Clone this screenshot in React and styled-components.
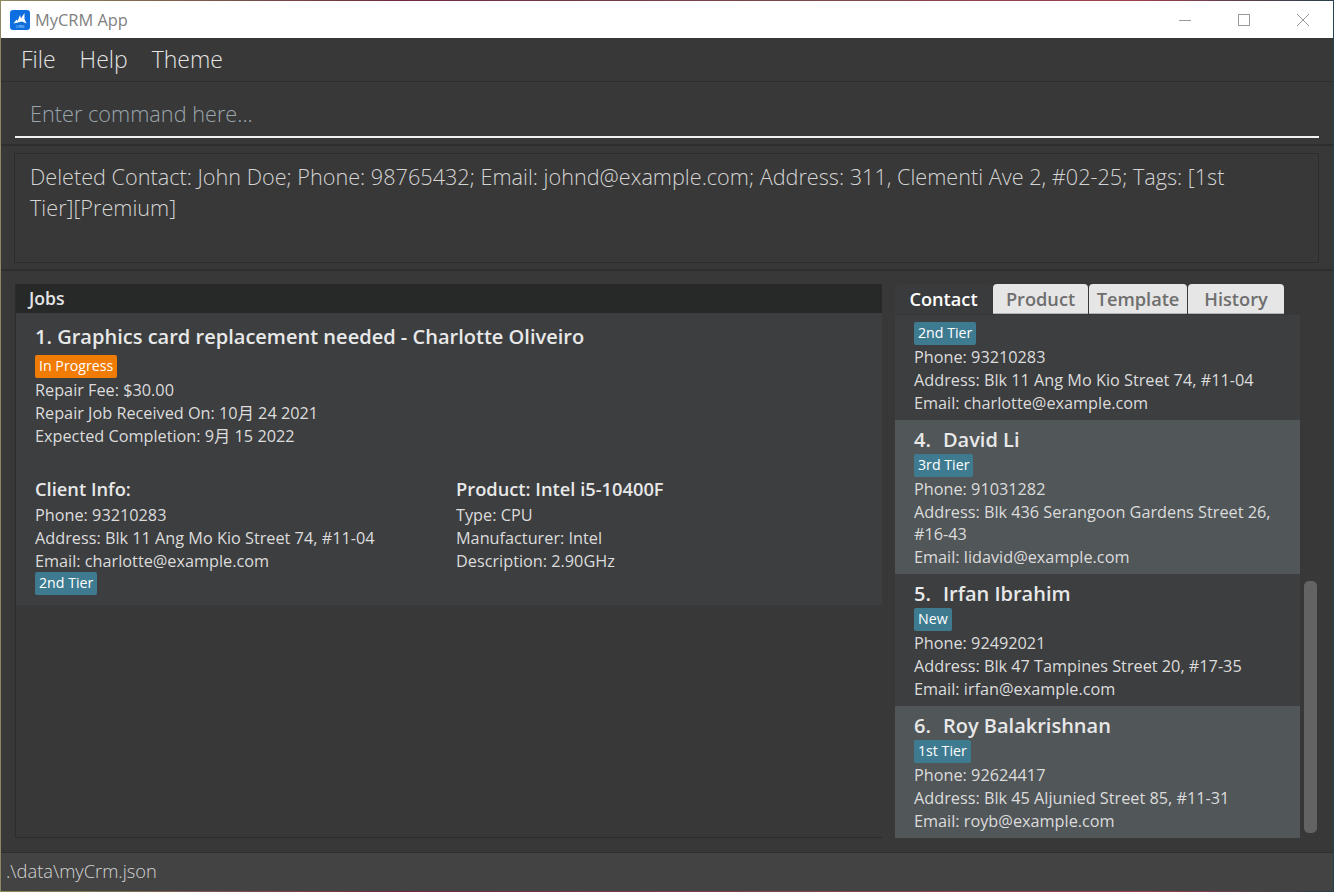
import React from 'react';
import styled, { createGlobalStyle } from 'styled-components';

const contacts = [
    { id: 3, tag: '2nd Tier', phone: '93210283', address: 'Blk 11 Ang Mo Kio Street 74, #11-04', email: 'charlotte@example.com' },
    { id: 4, name: 'David Li', tag: '3rd Tier', phone: '91031282', address: 'Blk 436 Serangoon Gardens Street 26, #16-43', email: 'lidavid@example.com', alt: true },
    { id: 5, name: 'Irfan Ibrahim', tag: 'New', phone: '92492021', address: 'Blk 47 Tampines Street 20, #17-35', email: 'irfan@example.com' },
    { id: 6, name: 'Roy Balakrishnan', tag: '1st Tier', phone: '92624417', address: 'Blk 45 Aljunied Street 85, #11-31', email: 'royb@example.com', alt: true },
];

function Logo() {
    return (
        <svg width="20" height="20" viewBox="0 0 20 20">
            <rect width="20" height="20" rx="3" fill="#0d6fdf" />
            <path d="M3.5 13.5 L6.5 9.5 L7.5 11 L10 5 L11 8.5 L14.5 3 L14.5 9 L16.5 13.5 L12 11.5 L8 12.5 Z" fill="#fff" />
            <text x="10" y="18" fontSize="4" fill="#bcdcff" textAnchor="middle" fontFamily="Open Sans, sans-serif">CRM</text>
        </svg>
    );
}

function App() {
    return (
        <>
            <GlobalStyle />
            <Window>
                <TitleBar>
                    <TitleLeft>
                        <Logo />
                        <TitleText>MyCRM App</TitleText>
                    </TitleLeft>
                    <WindowButtons>
                        <svg width="12" height="12" viewBox="0 0 12 12"><path d="M0 6.5H12" stroke="#999" fill="none" /></svg>
                        <svg width="12" height="12" viewBox="0 0 12 12"><rect x="0.5" y="0.5" width="11" height="11" stroke="#999" fill="none" /></svg>
                        <svg width="12" height="12" viewBox="0 0 12 12"><path d="M0 0L12 12M12 0L0 12" stroke="#999" fill="none" /></svg>
                    </WindowButtons>
                </TitleBar>
                <MenuBar>
                    <MenuItem>File</MenuItem>
                    <MenuItem>Help</MenuItem>
                    <MenuItem>Theme</MenuItem>
                </MenuBar>
                <CommandRow>
                    <CommandText>Enter command here...</CommandText>
                </CommandRow>
                <ResultRow>
                    <ResultBox>
                        Deleted Contact: John Doe; Phone: 98765432; Email: johnd@example.com; Address: 311, Clementi Ave 2, #02-25; Tags: [1st <NoBreak>Tier][Premium]</NoBreak>
                    </ResultBox>
                </ResultRow>
                <Main>
                    <JobsPanel>
                        <PanelHeader>Jobs</PanelHeader>
                        <JobCard>
                            <JobTitle>1. Graphics card replacement needed - Charlotte Oliveiro</JobTitle>
                            <Tag $status>In Progress</Tag>
                            <Line>Repair Fee: $30.00</Line>
                            <Line>Repair Job Received On: 10月 24 2021</Line>
                            <Line>Expected Completion: 9月 15 2022</Line>
                            <JobColumns>
                                <div>
                                    <SubHeading>Client Info:</SubHeading>
                                    <Line>Phone: 93210283</Line>
                                    <Line>Address: Blk 11 Ang Mo Kio Street 74, #11-04</Line>
                                    <Line>Email: charlotte@example.com</Line>
                                    <ClientTag>2nd Tier</ClientTag>
                                </div>
                                <div>
                                    <SubHeading>Product: Intel i5-10400F</SubHeading>
                                    <Line>Type: CPU</Line>
                                    <Line>Manufacturer: Intel</Line>
                                    <Line>Description: 2.90GHz</Line>
                                </div>
                            </JobColumns>
                        </JobCard>
                    </JobsPanel>
                    <SidePanel>
                        <Tabs>
                            <Tab $active $width={97}>Contact</Tab>
                            <Tab $width={95}>Product</Tab>
                            <Tab $width={98}>Template</Tab>
                            <Tab $width={96}>History</Tab>
                        </Tabs>
                        <ListArea>
                            <ContactList>
                                {contacts.map((c) => (
                                    <ContactCard key={c.id} $alt={c.alt}>
                                        {c.name && (
                                            <ContactName>{c.id}.<NameText>{c.name}</NameText></ContactName>
                                        )}
                                        <Tag>{c.tag}</Tag>
                                        <Line>Phone: {c.phone}</Line>
                                        <AddressLine>Address: {c.address}</AddressLine>
                                        <Line>Email: {c.email}</Line>
                                    </ContactCard>
                                ))}
                            </ContactList>
                            <ScrollTrack>
                                <ScrollThumb />
                            </ScrollTrack>
                        </ListArea>
                    </SidePanel>
                </Main>
                <StatusBar>.\data\myCrm.json</StatusBar>
            </Window>
        </>
    );
}

export default App;

const GlobalStyle = createGlobalStyle`
    html, body {
        margin: 0;
        height: 100%;
        overflow: hidden;
    }
    body {
        background: linear-gradient(90deg, #8c8a5e 0%, #6e2a3c 30%, #7a4a50 60%, #a0404c 85%, #26404c 100%);
        font-family: "Open Sans", "Noto Sans CJK SC", sans-serif;
    }
`;

const Window = styled.div`
    box-sizing: border-box;
    margin: 1px 1px 1px 1px;
    height: 890px;
    width: 1332px;
    display: flex;
    flex-direction: column;
    background-color: #383838;
    color: #d9d9d9;
`;

const TitleBar = styled.div`
    height: 37px;
    flex: none;
    background-color: #fff;
    display: flex;
    align-items: center;
    justify-content: space-between;
    padding: 0 24px 0 9px;
`;

const TitleLeft = styled.div`
    display: flex;
    align-items: center;
    gap: 5px;
`;

const TitleText = styled.span`
    font-size: 16.4px;
    color: #808080;
`;

const WindowButtons = styled.div`
    display: flex;
    gap: 47px;
    align-items: center;
`;

const MenuBar = styled.div`
    height: 44px;
    flex: none;
    display: flex;
    align-items: center;
    gap: 24px;
    padding: 0 0 2px 20px;
    box-sizing: border-box;
    border-bottom: 1px solid #2e2e2e;
`;

const MenuItem = styled.span`
    font-size: 23px;
    font-weight: 300;
    color: #e4e4e4;
`;

const CommandRow = styled.div`
    height: 64px;
    flex: none;
    box-sizing: border-box;
    padding: 0 14px 6px 14px;
    border-bottom: 2px solid #2e2e2e;
    display: flex;
`;

const CommandText = styled.div`
    flex: 1;
    box-sizing: border-box;
    height: 56px;
    padding: 14px 0 0 15px;
    font-size: 21.7px;
    font-weight: 300;
    line-height: 35px;
    color: #9aa5ad;
    border-bottom: 2px solid #f2f2f2;
`;

const ResultRow = styled.div`
    height: 125px;
    flex: none;
    box-sizing: border-box;
    padding: 7px 14px 6px 13px;
    border-bottom: 2px solid #2e2e2e;
    display: flex;
`;

const ResultBox = styled.div`
    flex: 1;
    box-sizing: border-box;
    border: 1px solid #2c2c2c;
    padding: 7px 15px;
    font-size: 21.65px;
    font-weight: 300;
    line-height: 31px;
    color: #d4d4d4;
`;

const NoBreak = styled.span`
    white-space: nowrap;
`;

const Main = styled.div`
    flex: 1;
    min-height: 0;
    display: flex;
    padding: 13px 15px 14px 14px;
    gap: 13px;
`;

const JobsPanel = styled.div`
    width: 867px;
    flex: none;
    box-sizing: border-box;
    border-left: 1px solid #2c2c2c;
    border-bottom: 1px solid #2c2c2c;
    display: flex;
    flex-direction: column;
`;

const PanelHeader = styled.div`
    height: 29px;
    flex: none;
    background-color: #272929;
    padding-left: 13px;
    font-size: 17.6px;
    font-weight: 600;
    line-height: 28px;
    color: #e4e4e4;
`;

const JobCard = styled.div`
    background-color: #3c3e40;
    padding: 10px 19px 9px 19px;
`;

const JobTitle = styled.div`
    font-size: 20.05px;
    font-weight: 600;
    line-height: 28px;
    color: #e8e8e8;
    margin-bottom: 4px;
`;

const Tag = styled.div`
    display: table;
    height: 23px;
    line-height: 22px;
    padding: 0 4px;
    margin-bottom: 1px;
    border-radius: 2px;
    font-size: 14.2px;
    color: #fff;
    background-color: ${(p) => (p.$status ? '#f07b05' : '#3e7b91')};
`;

const ClientTag = styled(Tag)`
    margin-top: -1px;
`;

const Line = styled.div`
    font-size: 16.25px;
    line-height: 23px;
    color: #dcdcdc;
`;

const AddressLine = styled(Line)`
    line-height: 22px;
    padding-bottom: 1px;
`;

const JobColumns = styled.div`
    display: grid;
    grid-template-columns: 421px 1fr;
    margin-top: 28px;
`;

const SubHeading = styled.div`
    font-size: 18.3px;
    font-weight: 600;
    line-height: 26px;
    margin-bottom: 2px;
    color: #e8e8e8;
`;

const SidePanel = styled.div`
    flex: 1;
    min-width: 0;
    display: flex;
    flex-direction: column;
`;

const Tabs = styled.div`
    height: 30px;
    flex: none;
    display: flex;
    gap: 1px;
`;

const Tab = styled.div`
    width: ${(p) => p.$width}px;
    box-sizing: border-box;
    border-radius: 4px 4px 0 0;
    text-align: center;
    font-size: 18.2px;
    font-weight: 600;
    padding-top: 1px;
    line-height: 28px;
    color: ${(p) => (p.$active ? '#fff' : '#6f6f6f')};
    background-color: ${(p) => (p.$active ? '#3a3b3c' : '#e6e6e6')};
    border-bottom: 1px solid ${(p) => (p.$active ? '#3a3b3c' : '#b4b4b4')};
`;

const ListArea = styled.div`
    flex: 1;
    min-height: 0;
    display: flex;
    gap: 4px;
    margin-top: 1px;
`;

const ContactList = styled.div`
    width: 405px;
    flex: none;
    display: flex;
    flex-direction: column;
    justify-content: flex-end;
    background-color: #3c3e40;
`;

const ContactCard = styled.div`
    flex: none;
    background-color: ${(p) => (p.$alt ? '#515658' : '#3c3e40')};
    padding: 6px 19px 5px 19px;
`;

const ContactName = styled.div`
    font-size: 20px;
    font-weight: 600;
    line-height: 28px;
    color: #e8e8e8;
`;

const NameText = styled.span`
    margin-left: 12px;
`;

const ScrollTrack = styled.div`
    flex: 1;
    display: flex;
    flex-direction: column;
    justify-content: flex-end;
    padding-bottom: 5px;
`;

const ScrollThumb = styled.div`
    width: 13px;
    height: 252px;
    border-radius: 5px;
    background-color: #636363;
`;

const StatusBar = styled.div`
    flex: none;
    height: 39px;
    box-sizing: border-box;
    background-color: #434343;
    border-top: 1px solid #2e2e2e;
    padding-left: 5px;
    font-size: 18.3px;
    font-weight: 300;
    line-height: 36px;
    color: #d4d4d4;
`;
